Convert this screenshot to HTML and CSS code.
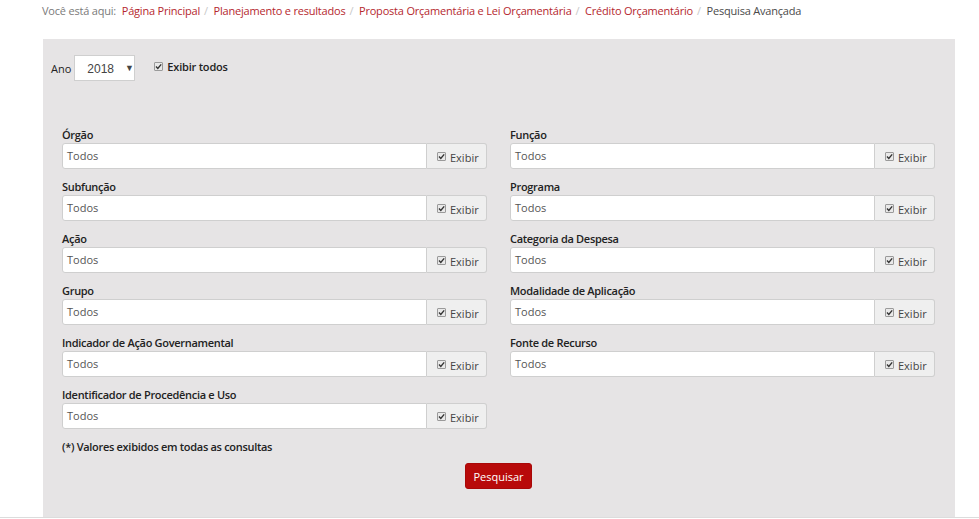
FILE: index.html
```html
<!DOCTYPE html>
<html lang="pt-BR">
<head>
<meta charset="utf-8">
<title>Pesquisa Avançada</title>
<link rel="stylesheet" href="styles.css">
</head>
<body>
<nav class="breadcrumb">
  <span class="here">Você está aqui:</span>
  <a href="#">Página Principal</a><span class="sep">/</span>
  <a href="#">Planejamento e resultados</a><span class="sep">/</span>
  <a href="#">Proposta Orçamentária e Lei Orçamentária</a><span class="sep">/</span>
  <a href="#">Crédito Orçamentário</a><span class="sep">/</span>
  <span class="active">Pesquisa Avançada</span>
</nav>

<main class="panel">
  <div class="top-row">
    <span class="ano-label">Ano</span>
    <div class="select"><span class="select-value">2018</span><span class="caret">▼</span></div>
    <label class="check-all"><span class="cb"><svg viewBox="0 0 9 9" width="9" height="9"><path d="M2 4.6 L3.8 6.4 L7.2 2.4" fill="none" stroke="#333" stroke-width="1.4"/></svg></span>Exibir todos</label>
  </div>

  <div class="fields">
    <div class="field">
      <div class="label">Órgão</div>
      <div class="group"><div class="input">Todos</div><div class="addon"><span class="cb"><svg viewBox="0 0 9 9" width="9" height="9"><path d="M2 4.6 L3.8 6.4 L7.2 2.4" fill="none" stroke="#333" stroke-width="1.4"/></svg></span>Exibir</div></div>
    </div>
    <div class="field">
      <div class="label">Função</div>
      <div class="group"><div class="input">Todos</div><div class="addon"><span class="cb"><svg viewBox="0 0 9 9" width="9" height="9"><path d="M2 4.6 L3.8 6.4 L7.2 2.4" fill="none" stroke="#333" stroke-width="1.4"/></svg></span>Exibir</div></div>
    </div>
    <div class="field">
      <div class="label">Subfunção</div>
      <div class="group"><div class="input">Todos</div><div class="addon"><span class="cb"><svg viewBox="0 0 9 9" width="9" height="9"><path d="M2 4.6 L3.8 6.4 L7.2 2.4" fill="none" stroke="#333" stroke-width="1.4"/></svg></span>Exibir</div></div>
    </div>
    <div class="field">
      <div class="label">Programa</div>
      <div class="group"><div class="input">Todos</div><div class="addon"><span class="cb"><svg viewBox="0 0 9 9" width="9" height="9"><path d="M2 4.6 L3.8 6.4 L7.2 2.4" fill="none" stroke="#333" stroke-width="1.4"/></svg></span>Exibir</div></div>
    </div>
    <div class="field">
      <div class="label">Ação</div>
      <div class="group"><div class="input">Todos</div><div class="addon"><span class="cb"><svg viewBox="0 0 9 9" width="9" height="9"><path d="M2 4.6 L3.8 6.4 L7.2 2.4" fill="none" stroke="#333" stroke-width="1.4"/></svg></span>Exibir</div></div>
    </div>
    <div class="field">
      <div class="label">Categoria da Despesa</div>
      <div class="group"><div class="input">Todos</div><div class="addon"><span class="cb"><svg viewBox="0 0 9 9" width="9" height="9"><path d="M2 4.6 L3.8 6.4 L7.2 2.4" fill="none" stroke="#333" stroke-width="1.4"/></svg></span>Exibir</div></div>
    </div>
    <div class="field">
      <div class="label">Grupo</div>
      <div class="group"><div class="input">Todos</div><div class="addon"><span class="cb"><svg viewBox="0 0 9 9" width="9" height="9"><path d="M2 4.6 L3.8 6.4 L7.2 2.4" fill="none" stroke="#333" stroke-width="1.4"/></svg></span>Exibir</div></div>
    </div>
    <div class="field">
      <div class="label">Modalidade de Aplicação</div>
      <div class="group"><div class="input">Todos</div><div class="addon"><span class="cb"><svg viewBox="0 0 9 9" width="9" height="9"><path d="M2 4.6 L3.8 6.4 L7.2 2.4" fill="none" stroke="#333" stroke-width="1.4"/></svg></span>Exibir</div></div>
    </div>
    <div class="field">
      <div class="label">Indicador de Ação Governamental</div>
      <div class="group"><div class="input">Todos</div><div class="addon"><span class="cb"><svg viewBox="0 0 9 9" width="9" height="9"><path d="M2 4.6 L3.8 6.4 L7.2 2.4" fill="none" stroke="#333" stroke-width="1.4"/></svg></span>Exibir</div></div>
    </div>
    <div class="field">
      <div class="label">Fonte de Recurso</div>
      <div class="group"><div class="input">Todos</div><div class="addon"><span class="cb"><svg viewBox="0 0 9 9" width="9" height="9"><path d="M2 4.6 L3.8 6.4 L7.2 2.4" fill="none" stroke="#333" stroke-width="1.4"/></svg></span>Exibir</div></div>
    </div>
    <div class="field">
      <div class="label">Identificador de Procedência e Uso</div>
      <div class="group"><div class="input">Todos</div><div class="addon"><span class="cb"><svg viewBox="0 0 9 9" width="9" height="9"><path d="M2 4.6 L3.8 6.4 L7.2 2.4" fill="none" stroke="#333" stroke-width="1.4"/></svg></span>Exibir</div></div>
    </div>
  </div>

  <p class="note">(*) Valores exibidos em todas as consultas</p>

  <div class="actions"><button class="btn" type="button">Pesquisar</button></div>
</main>
<div class="footer-line"></div>
</body>
</html>
```

FILE: styles.css
```css
* { box-sizing: border-box; }
html, body { margin: 0; padding: 0; background: #fff; }
body {
  font-family: "Open Sans", "Noto Sans", sans-serif;
  font-size: 11px;
  color: #333;
}
.breadcrumb {
  height: 39px;
  padding: 2px 0 0 42px;
  line-height: 17px;
  font-size: 11px;
  letter-spacing: -0.2px;
  white-space: nowrap;
}
.breadcrumb .here { color: #7a7a7a; margin-right: 3px; }
.breadcrumb a { color: #b5282e; text-decoration: none; }
.breadcrumb .sep { color: #c8c8c8; margin: 0 3px 0 4px; }
.breadcrumb .active { color: #4a4a4a; }

.panel {
  margin-left: 43px;
  width: 912px;
  background: #e6e4e5;
  padding: 16px 20px 28px 19px;
}
.top-row {
  display: flex;
  align-items: center;
  height: 26px;
  margin-left: -11px;
}
.ano-label { color: #222; margin-right: 3px; font-size: 11px; }
.select {
  width: 61px;
  height: 26px;
  background: #fff;
  border: 1px solid #cfcfcf;
  display: flex;
  align-items: center;
  padding: 2px 0 0 12px;
  color: #444;
  font-family: "Liberation Sans", Arial, sans-serif;
  font-size: 12px;
}
.select .caret { font-size: 9px; margin-left: 11px; margin-top: -3px; color: #444; }
.check-all {
  display: flex;
  align-items: center;
  margin-left: 19px;
  color: #222;
  align-self: flex-start;
  margin-top: 4px;
  font-weight: 600;
  letter-spacing: -0.2px;
}
.cb {
  display: inline-block;
  width: 9px;
  height: 9px;
  border: 1px solid #9a9a9a;
  border-radius: 1px;
  background: #e9e9e9;
  margin-right: 4px;
  position: relative;
}
.cb svg { position: absolute; left: -1px; top: -1px; }

.fields {
  display: grid;
  grid-template-columns: 425px 425px;
  column-gap: 23px;
  row-gap: 9px;
  margin-top: 45px;
}
.label {
  line-height: 17px;
  font-weight: 600;
  letter-spacing: -0.3px;
  color: #222;
}
.group {
  display: flex;
  height: 26px;
}
.input {
  flex: 1;
  background: #fff;
  border: 1px solid #cfcfcf;
  border-radius: 3px 0 0 3px;
  padding: 0 4px;
  line-height: 24px;
  font-size: 11px;
  color: #555;
}
.addon {
  width: 60px;
  background: #efefef;
  border: 1px solid #cfcfcf;
  border-left: none;
  border-radius: 0 3px 3px 0;
  display: flex;
  align-items: center;
  padding-left: 10px;
  padding-top: 3px;
  font-size: 11px;
  color: #444;
}
.addon .cb { margin-right: 4px; margin-top: -3px; }
.note {
  margin: 9px 0 0 0;
  line-height: 17px;
  font-weight: 600;
  letter-spacing: -0.3px;
  color: #222;
}
.actions {
  display: flex;
  justify-content: center;
  margin-top: 8px;
}
.btn {
  width: 67px;
  height: 26px;
  background: #b80a0a;
  color: #fff;
  border: 1px solid #a80808;
  border-radius: 3px;
  font-family: "Open Sans", "Noto Sans", sans-serif;
  font-size: 11px;
  padding: 0;
}
.footer-line { height: 1px; background: #dcdcdc; }
```
